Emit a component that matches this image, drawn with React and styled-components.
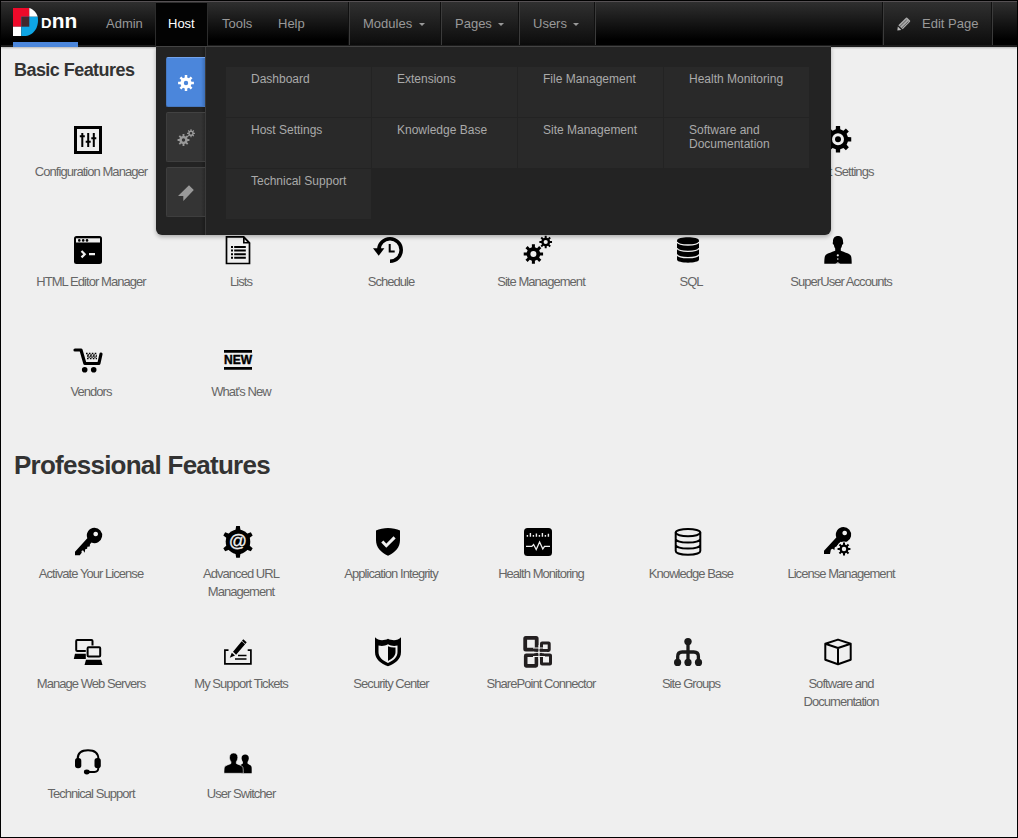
import React from "react";
import styled, { createGlobalStyle, css } from "styled-components";

const GlobalStyle = createGlobalStyle`
  * { box-sizing: border-box; }
  body {
    margin: 0;
    background: #efefef;
    font-family: "Liberation Sans", Arial, sans-serif;
  }
  svg { display: block; }
`;

const Page = styled.div`
  position: relative;
  width: 1018px;
  height: 838px;
  overflow: hidden;
  border: 1px solid #000;
  background: #efefef;
`;

const NavBar = styled.nav`
  display: flex;
  height: 46px;
  border-top: 1px solid #565154;
  border-bottom: 2px solid #1c1c1c;
  background: linear-gradient(#2f2f2f, #000 88%);
  box-shadow: 0 1px 2px rgba(0, 0, 0, 0.25);
`;

const Brand = styled.div`
  width: 92px;
  padding: 6px 0 0 12px;
`;

const BrandBar = styled.div`
  position: relative;
  z-index: 1;
  width: 65px;
  height: 5px;
  margin-top: 6px;
  background: #4b86db;
`;

const NavItem = styled.a`
  width: ${(p) => p.$width}px;
  padding-left: ${(p) => p.$pad || 13}px;
  color: #999;
  font-size: 13px;
  line-height: 43px;
  ${(p) =>
    p.$active &&
    css`
      height: 44px;
      margin-top: 1px;
      padding-left: 12px;
      line-height: 41px;
      color: #fff;
      background: #030303;
      border: 1px solid #2c2c2c;
      border-width: 0 1px;
    `}
`;

const NavGroup = styled.a`
  display: flex;
  align-items: center;
  gap: ${(p) => p.$gap || 7}px;
  width: ${(p) => p.$width}px;
  padding: 0 0 ${(p) => p.$lift || 0}px 13px;
  border-left: 1px solid #3b3b3b;
  box-shadow: -1px 0 0 #101010;
  color: #999;
  font-size: 13px;
  background: linear-gradient(#303030, #0c0c0c);
`;

const NavEnd = styled.div`
  width: 25px;
  border-left: 1px solid #3b3b3b;
  box-shadow: -1px 0 0 #101010;
`;

const Spacer = styled.div`
  flex: 1;
  border-left: 1px solid #3b3b3b;
  box-shadow: -1px 0 0 #101010;
`;

const Caret = styled.span`
  border: 3.5px solid transparent;
  border-top: 3px solid #999;
  border-bottom: 0;
  margin-top: 2px;
`;

const Menu = styled.div`
  position: absolute;
  z-index: 2;
  top: 45px;
  left: 155px;
  display: flex;
  width: 675px;
  height: 189px;
  border-top: 1px solid #444;
  border-radius: 0 0 6px 6px;
  background: #232323;
  box-shadow: 0 2px 4px rgba(0, 0, 0, 0.28);
`;

const MenuTabs = styled.div`
  display: flex;
  flex-direction: column;
  gap: 5px;
  width: 50px;
  padding: 10px 0 0 10px;
  border-right: 1px solid #3a3a3a;
  background: linear-gradient(90deg, transparent 45px, #1b1b1b 49px);
`;

const MenuTab = styled.div`
  display: flex;
  align-items: center;
  justify-content: center;
  height: 50px;
  padding-right: 1px;
  padding-top: 2px;
  border: 1px solid ${(p) => (p.$active ? "#4678c0" : "#3e3e3e")};
  border-top-color: ${(p) => (p.$active ? "#73a3ec" : "#424242")};
  border-right: 0;
  border-radius: 2px 0 0 2px;
  background: ${(p) =>
    p.$active
      ? "linear-gradient(90deg, #4b86db 34px, #3c6eb6)"
      : "linear-gradient(90deg, #343434 34px, #292929)"};
`;

const MenuGrid = styled.div`
  display: grid;
  grid-template-columns: repeat(4, 145px);
  grid-auto-rows: 50px;
  gap: 1px;
  padding: 20px 0 0 20px;
  align-content: start;
`;

const MenuCell = styled.a`
  padding: 5px 8px 0 25px;
  background: #292929;
  color: #aaa;
  font-size: 12px;
  line-height: 14px;
`;

const Main = styled.main`
  padding: 11px 0 0 13px;
`;

const Heading = styled.h2`
  margin: 0;
  color: #333;
  font-weight: bold;
  font-size: ${(p) => (p.$large ? 26 : 18)}px;
  line-height: ${(p) => (p.$large ? 30 : 24)}px;
  letter-spacing: ${(p) => (p.$large ? -0.75 : -0.55)}px;
`;

const FeatureGrid = styled.div`
  display: grid;
  grid-template-columns: repeat(6, 150px);
  grid-auto-rows: 80px;
  row-gap: 30px;
  margin: ${(p) => p.$margin};
`;

const Tile = styled.a`
  display: flex;
  flex-direction: column;
  align-items: center;
  gap: 7px;
  grid-column: ${(p) => p.$col || "auto"};
`;

const TileIcon = styled.svg`
  width: 32px;
  height: 32px;
  margin-right: 6px;
  flex: none;
`;

const TileLabel = styled.span`
  width: 124px;
  text-align: center;
  color: #666;
  font-size: 13px;
  line-height: 18px;
  letter-spacing: -0.95px;
`;

const BG = "#efefef";

function gearPath(cx, cy, outer, inner, teeth, hole, offset = 0, top = 0.2, base = 0.28) {
  const step = (Math.PI * 2) / teeth;
  const pts = [];
  const at = (r, a) => `${(cx + r * Math.sin(a)).toFixed(2)} ${(cy - r * Math.cos(a)).toFixed(2)}`;
  for (let i = 0; i < teeth; i++) {
    const a = i * step + offset;
    pts.push(at(inner, a - step * base), at(outer, a - step * top), at(outer, a + step * top), at(inner, a + step * base));
  }
  const ring = hole
    ? `M${cx - hole} ${cy}a${hole} ${hole} 0 1 0 ${hole * 2} 0a${hole} ${hole} 0 1 0 ${-hole * 2} 0Z`
    : "";
  return `M${pts.join("L")}Z${ring}`;
}

const Gear = ({ c, r, n = 8, hole, body = 0.7, ...rest }) => (
  <path fillRule="evenodd" d={gearPath(c[0], c[1], r, r * body, n, hole)} {...rest} />
);

const line = { fill: "none", stroke: "#000" };
const light = { fill: "none", stroke: BG };

const icons = {
  config: (
    <>
      <rect x="3.5" y="3.5" width="25" height="25" strokeWidth="3" {...line} />
      <path d="M10.3 9v14M16.2 9v14M21.8 9v14M7.8 12.2h5M13.7 17.7h5M19.3 14.3h5" strokeWidth="2" {...line} />
    </>
  ),
  editor: (
    <>
      <rect x="2" y="2" width="28" height="28" rx="2.5" />
      <path d="M4 4.3h24v4.2H4z" fill={BG} />
      <circle cx="7.3" cy="6.4" r="1.3" />
      <circle cx="11.2" cy="6.4" r="1.3" />
      <circle cx="15" cy="6.4" r="1.3" />
      <path d="M9.5 17l3.2 3.2-3.2 3.2M17 20.2h6" strokeWidth="2.2" {...light} />
    </>
  ),
  list: (
    <>
      <path d="M4.5 2.8h17.2l5.8 6v20.7h-23z" strokeWidth="1.7" {...line} />
      <path d="M21 2l7.3 7.5H21z" />
      <path d="M22.6 5.2l2.6 2.7h-2.6z" fill={BG} />
      <path d="M9 13h2M9 16.6h2M9 20.2h2M9 23.8h2M12.2 13h11.6M12.2 16.6h11.6M12.2 20.2h11.6M12.2 23.8h11.6" strokeWidth="2" {...line} />
    </>
  ),
  schedule: (
    <>
      <path d="M18 27.2A11.2 11.2 0 1 0 6.8 16" strokeWidth="3.6" {...line} />
      <path d="M1 14.3h11.4l-5.7 7.4z" />
      <path d="M17.7 10v7.4h5" strokeWidth="2" {...line} />
    </>
  ),
  gears: (
    <>
      <Gear c={[11.4, 20]} r={9.8} hole={3} />
      <Gear c={[23.7, 8]} r={6.4} hole={2.1} />
    </>
  ),
  gear: (
    <>
      <Gear c={[16, 15.3]} r={13.4} hole={6} body={0.76} />
      <circle cx="16" cy="15.3" r="3" />
    </>
  ),
  sql: (
    <>
      <path d="M5 6.5C5 2.3 27 2.3 27 6.5v19c0 4.2-22 4.2-22 0z" />
      <path d="M5 8c2 4 20 4 22 0M5 14.3c2 4 20 4 22 0M5 20.6c2 4 20 4 22 0" strokeWidth="1.3" {...light} />
    </>
  ),
  superuser: (
    <>
      <path d="M16 2c3.6 0 5.3 2.6 5 6.200.6.2.3 2.300-.9 2.600-.2 1.800-.7 2.800-1.300 3.700v2.200c3.300 1.700 9 2.300 10.200 5.300.6 1.700.7 5 .7 7.700H2.300c0-2.700.1-6 .7-7.700 1.200-3 6.900-3.600 10.200-5.300v-2.200c-.6-.9-1.100-1.900-1.300-3.700-1.200-.3-1.500-2.400-.9-2.600C10.700 4.600 12.400 2 16 2z" />
      <circle cx="15.800" cy="21.300" r="1.100" fill={BG} />
      <circle cx="15.800" cy="25" r=".8" fill={BG} />
      <path d="M13.300 29.700l2.500-1.500 2.500 1.500z" fill={BG} />
    </>
  ),
  cart: (
    <>
      <path d="M3 6h6l3.900 13.500h14L29 10" strokeWidth="3.200" strokeLinecap="round" strokeLinejoin="round" {...line} />
      <circle cx="12.700" cy="25.700" r="2.800" />
      <circle cx="21.700" cy="25.700" r="2.800" />
      <path d="M14 9.500h10.500M15 12h10M15 14.500h10" strokeWidth="1.600" strokeDasharray="1.600 1.300" {...line} />
      <path d="M15.500 10.800h9M16.400 13.200h8" strokeWidth="1.300" strokeDasharray="1.500 1.400" {...line} />
    </>
  ),
  fresh: (
    <>
      <path d="M2 7.400h28M2 24.400h28" strokeWidth="2.600" {...line} />
      <text x="2" y="20.300" textLength="28" lengthAdjust="spacingAndGlyphs" fontSize="12" fontWeight="bold" stroke="#000" strokeWidth=".4">
        NEW
      </text>
    </>
  ),
  key: (
    <>
      <path fillRule="evenodd" d="M22.300 1.700a7.700 7.700 0 1 1-2.800 14.800l-1.500 1.700-.3 2.200-2.300.4-.3 2-1.900.4-.5 3.600-1.700-2.600-1.500.8.2 1.800-1.900 2.500H3v-3.500L15.300 12.200A7.700 7.700 0 0 1 22.300 1.700zM23.700 5.700a2.300 2.300 0 1 0 .01 0z" />
    </>
  ),
  url: (
    <>
      <path d={gearPath(16, 15.800, 16, 12, 6, 0, 0, 0.110, 0.200)} />
      <circle cx="16" cy="15.800" r="12.300" />
      <text x="16" y="21" textAnchor="middle" fontSize="18" fill={BG} stroke={BG} strokeWidth=".3">@</text>
    </>
  ),
  integrity: (
    <>
      <path d="M16 2c4 0 9 1 12 2.500V14c0 7.500-5 12.500-12 15.700C9 26.500 4 21.500 4 14V4.500C7 3 12 2 16 2z" />
      <path d="M10.300 15.500l4 4.200 8.300-8.300" strokeWidth="3" {...light} />
    </>
  ),
  health: (
    <>
      <rect x="2" y="2" width="28" height="28" rx="3.500" />
      <path d="M5.400 10.800V9M8.400 10.800V7M11.400 10.800V9M14.400 10.800V7.500M17.400 10.800V9M20.400 10.800V7M23.400 10.800V9M26.400 10.800V7.800" strokeWidth="1.400" {...light} />
      <path d="M4 20.400h5.800l1.800-1.900 2.600 5 3.400-7.500 3.200 7 1.700-2.600H28" strokeWidth="1.300" {...light} />
    </>
  ),
  knowledge: (
    <>
      <ellipse cx="16" cy="6.600" rx="12.300" ry="3.700" strokeWidth="2" {...line} />
      <path d="M3.700 6.600v18.300c0 5 24.600 5 24.600 0V6.600M3.700 12.800c0 5 24.600 5 24.600 0M3.700 18.800c0 5 24.600 5 24.600 0" strokeWidth="2" {...line} />
    </>
  ),
  license: (
    <>
      <path fillRule="evenodd" d="M21.300 1a7.700 7.700 0 1 1-2.800 14.800l-1.500 1.700-2.500 3-1.700.8-.5 3-1.400-1.600-2 .8-.9 4.500H2v-3.300L14.300 11.500A7.700 7.700 0 0 1 21.300 1zM22.700 4.700a2.300 2.300 0 1 0 .01 0z" />
      <circle cx="22" cy="23" r="7.600" fill={BG} />
      <Gear c={[22, 23]} r={6.500} hole={2.200} />
    </>
  ),
  servers: (
    <>
      <rect x="4.200" y="4" width="16.300" height="11" rx="1" strokeWidth="2" {...line} />
      <path d="M3 17.700h11V23H1.800z" />
      <rect x="13.800" y="9.500" width="16" height="13.500" fill={BG} />
      <rect x="15.600" y="11.300" width="12.600" height="9.300" rx="1" strokeWidth="2" {...line} />
      <path d="M14 23.700h15l1.500 5.400H12.500z" />
    </>
  ),
  tickets: (
    <>
      <path d="M6.500 14.200H2.900v13.700h26V14.200h-3.200" strokeWidth="1.700" {...line} />
      <path d="M11 15.800L19.700 5.200l3.400 3.100-9 10.400z M9.800 16.800l3.200 2.700-5.200 2.200z" />
      <path d="M20 4.800l1.300-1.500 3.400 3-1.300 1.600z" />
      <path d="M16 19.600h8.500M13 23h11.500" strokeWidth="1.500" {...line} />
    </>
  ),
  security: (
    <>
      <path d="M3 1.300C6 4.600 11.500 5 16 2.700c4.500 2.300 10 1.900 13-1.400V16c0 7.500-6 11.500-13 14.300C9 27.500 3 23.500 3 16z" />
      <path d="M6.500 9.500c3.300.8 6.500.5 9.500-1.300 3 1.800 6.200 2.100 9.500 1.300V16c0 5.500-4.500 8.600-9.500 11-5-2.400-9.500-5.500-9.500-11z" fill={BG} />
      <path d="M16 10.200c2.300 1.100 4.800 1.500 7.500 1.200V16c0 4-3.300 6.700-7.500 9z" />
    </>
  ),
  sharepoint: (
    <>
      <g fill="none" stroke="#231f20">
        <rect x="3.200" y="1.900" width="11.500" height="11.700" rx=".6" strokeWidth="3.800" />
        <rect x="19.500" y="6.900" width="7.700" height="7.500" rx=".6" strokeWidth="3" />
        <rect x="3.700" y="19.300" width="10.700" height="10.600" rx=".6" strokeWidth="3.600" />
        <rect x="19.500" y="19" width="9" height="9" rx=".6" strokeWidth="3" />
        <path d="M12 14.200h10M12 18.700h10M14.800 11v11M19 11v11" strokeWidth="2.500" />
      </g>
      <path d="M11 16.400h14M17 9v14M11 12h12M11 20.500h12" strokeWidth="1" {...light} />
    </>
  ),
  groups: (
    <>
      <path d="M16 6v20M5.700 26v-5.500Q5.700 16 10.200 16h11.600q4.600 0 4.600 4.500V26" fill="none" stroke="#1a1a1a" strokeWidth="3.300" />
      <g fill="#1a1a1a">
        <circle cx="16" cy="5.600" r="3.700" />
        <circle cx="5.600" cy="26.400" r="3.600" />
        <circle cx="16" cy="26.400" r="3.600" />
        <circle cx="26.500" cy="26.400" r="3.600" />
      </g>
    </>
  ),
  box: <path d="M16 3.600l12.700 4.200v16L16 28.200 3.300 23.800v-16zM3.300 7.800L16 12l12.700-4.200M16 12v16" strokeWidth="2" strokeLinejoin="round" {...line} />,
  headset: (
    <>
      <path d="M5.600 13C5.600 7 10 4.200 16 4.200S26.400 7 26.400 13v8.500q0 4.500-4 4.500H15" strokeWidth="1.900" {...line} />
      <rect x="3" y="12" width="6.300" height="10.300" rx="2.800" />
      <rect x="22.500" y="12" width="6.300" height="10.300" rx="2.800" />
      <ellipse cx="14.800" cy="26" rx="2.900" ry="2.400" />
    </>
  ),
  users: (
    <>
      <path d="M19.300 27.300V22c0-1.500-.3-2.300-1-3 1.200-.6 2-.9 2.600-1.400v-1.500c-.8-1-1.200-2.200-1.300-3.500-.2-2.500 1.300-4 3.600-4s3.800 1.500 3.600 4c-.1 1.300-.5 2.500-1.300 3.500v1.500c1.300 1.200 3.400 1.400 4 3.200.3 1.300.2 4.200.2 6.500z" />
      <path d="M11.700 7c2.600 0 4.200 1.700 4.100 4.500 0 1.700-.6 3.200-1.500 4.300v1.700c1.700 1.200 5.600 1.600 6.500 3.600.5 1.500.5 4 .5 6.200H2c0-2.200 0-4.700.5-6.200.9-2 4.800-2.400 6.500-3.600v-1.700c-.9-1.100-1.500-2.600-1.500-4.300C7.500 8.700 9.100 7 11.700 7z" stroke={BG} strokeWidth=".6" />
    </>
  ),
};

const basic = [
  ["config", "Configuration Manager"],
  ["gear", "Host Settings", 6],
  ["editor", "HTML Editor Manager"],
  ["list", "Lists"],
  ["schedule", "Schedule"],
  ["gears", "Site Management"],
  ["sql", "SQL"],
  ["superuser", "SuperUser Accounts"],
  ["cart", "Vendors"],
  ["fresh", "What's New"],
];

const professional = [
  ["key", "Activate Your License"],
  ["url", "Advanced URL Management"],
  ["integrity", "Application Integrity"],
  ["health", "Health Monitoring"],
  ["knowledge", "Knowledge Base"],
  ["license", "License Management"],
  ["servers", "Manage Web Servers"],
  ["tickets", "My Support Tickets"],
  ["security", "Security Center"],
  ["sharepoint", "SharePoint Connector"],
  ["groups", "Site Groups"],
  ["box", "Software and Documentation"],
  ["headset", "Technical Support"],
  ["users", "User Switcher"],
];

const menuLinks = [
  "Dashboard",
  "Extensions",
  "File Management",
  "Health Monitoring",
  "Host Settings",
  "Knowledge Base",
  "Site Management",
  "Software and Documentation",
  "Technical Support",
];

const Features = ({ items, margin }) => (
  <FeatureGrid $margin={margin}>
    {items.map(([icon, label, col]) => (
      <Tile key={label} $col={col}>
        <TileIcon viewBox="0 0 32 32">{icons[icon]}</TileIcon>
        <TileLabel>{label}</TileLabel>
      </Tile>
    ))}
  </FeatureGrid>
);

const Logo = () => (
  <svg width="65" height="28" viewBox="0 0 65 28">
    <path d="M0 0h16.300v18.700H0z" fill="#ee0a2a" />
    <path d="M16.300 0c4 1.300 7.200 4.700 8.400 8.700h-8.400z" fill="#fff" />
    <path d="M0 18.700h8.300V28H0z" fill="#fff" />
    <path d="M8.300 8.700h16.400C26.500 19 20.500 28 11 28H8.300z" fill="#0ea5e5" />
    <path d="M8.300 8.700h8v10h-8z" fill="#43272d" />
    <text x="28" y="19.600" fontSize="14.600" fontWeight="bold" fill="#fff">D</text>
    <text x="38.700" y="19.600" fontSize="20" fontWeight="bold" fill="#fff" textLength="25.500" lengthAdjust="spacingAndGlyphs">nn</text>
  </svg>
);

const Pencil = () => (
  <svg width="14" height="14" viewBox="0 0 14 14">
    <path d="M1.300 8.200L9 .8q.6-.5 1.200 0L13 3.600q.5.600 0 1.200L5.700 12.300z" fill="#aaa" />
    <path d="M3 9.300l6.800-6.600M4.700 11l6.800-6.600" stroke="#444" strokeWidth=".8" />
    <path d="M.8 9.600L4.300 13 .3 13.500z" fill="#bbb" />
  </svg>
);

export default function App() {
  return (
    <Page>
      <GlobalStyle />
      <NavBar>
        <Brand>
          <Logo />
          <BrandBar />
        </Brand>
        <NavItem $width={62}>Admin</NavItem>
        <NavItem $width={53} $active>Host</NavItem>
        <NavItem $width={57} $pad={14}>Tools</NavItem>
        <NavItem $width={84}>Help</NavItem>
        <NavGroup $width={92} $lift={1}>Modules<Caret /></NavGroup>
        <NavGroup $width={78} $lift={1} $gap={6}>Pages<Caret /></NavGroup>
        <NavGroup $width={76} $lift={1} $gap={6}>Users<Caret /></NavGroup>
        <Spacer />
        <NavGroup $width={109} $gap={11}><Pencil />Edit Page</NavGroup>
        <NavEnd />
      </NavBar>

      <Menu>
        <MenuTabs>
          <MenuTab $active>
            <svg width="16" height="16" viewBox="0 0 16 16"><Gear c={[8, 8]} r={8} hole={2.200} fill="#fff" /></svg>
          </MenuTab>
          <MenuTab>
            <svg width="18" height="18" viewBox="0 0 18 18">
              <g fill="#999"><Gear c={[6.500, 11]} r={6} hole={1.700} /><Gear c={[14, 4.300]} r={4} hole={1.300} /></g>
            </svg>
          </MenuTab>
          <MenuTab>
            <svg width="18" height="18" viewBox="0 0 18 18"><path d="M12 1.300l4.800 4.600L6.300 17v-5H1z" fill="#999" /></svg>
          </MenuTab>
        </MenuTabs>
        <MenuGrid>
          {menuLinks.map((label) => (
            <MenuCell key={label}>{label}</MenuCell>
          ))}
        </MenuGrid>
      </Menu>

      <Main>
        <Heading>Basic Features</Heading>
        <Features items={basic} margin="42px 0 26px 2px" />
        <Heading $large>Professional Features</Heading>
        <Features items={professional} margin="46px 0 0 2px" />
      </Main>
    </Page>
  );
}
